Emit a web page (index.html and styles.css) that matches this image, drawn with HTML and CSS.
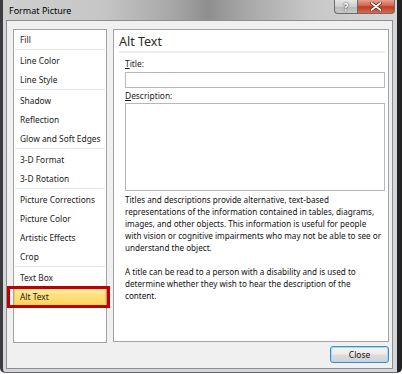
FILE: index.html
```html
<!DOCTYPE html>
<html>
<head>
<meta charset="utf-8">
<link rel="stylesheet" href="styles.css">
</head>
<body>
<div class="window">
  <div class="titlebar">
    <span class="title">Format Picture</span>
    <div class="caption-btns">
      <span class="cbtn help">?</span>
      <span class="cbtn close">
        <svg width="12" height="9" viewBox="0 0 12 9"><path d="M1.5 1 L10.5 8 M10.5 1 L1.5 8" stroke="#5a1a10" stroke-width="3.2" stroke-linecap="round"/><path d="M1.5 1 L10.5 8 M10.5 1 L1.5 8" stroke="#ffffff" stroke-width="1.8" stroke-linecap="round"/></svg>
      </span>
    </div>
  </div>
  <div class="client">
    <div class="panes">
      <ul class="nav">
        <li class="item">Fill</li>
        <li class="sep"></li>
        <li class="item">Line Color</li>
        <li class="item">Line Style</li>
        <li class="sep"></li>
        <li class="item">Shadow</li>
        <li class="item">Reflection</li>
        <li class="item">Glow and Soft Edges</li>
        <li class="sep"></li>
        <li class="item">3-D Format</li>
        <li class="item">3-D Rotation</li>
        <li class="sep"></li>
        <li class="item">Picture Corrections</li>
        <li class="item">Picture Color</li>
        <li class="item">Artistic Effects</li>
        <li class="item">Crop</li>
        <li class="sep"></li>
        <li class="item">Text Box</li>
        <li class="item selected">Alt Text</li>
      </ul>
      <div class="content">
        <h1 class="heading">Alt Text</h1>
        <div class="form">
          <label class="label"><u>T</u>itle:</label>
          <div class="input"></div>
          <label class="label desc-label"><u>D</u>escription:</label>
          <div class="textarea"></div>
          <p class="para">Titles and descriptions provide alternative, text-based<br>representations of the information contained in tables, diagrams,<br>images, and other objects. This information is useful for people<br>with vision or cognitive impairments who may not be able to see or<br>understand the object.</p>
          <p class="para">A title can be read to a person with a disability and is used to<br>determine whether they wish to hear the description of the<br>content.</p>
        </div>
      </div>
    </div>
    <div class="footer">
      <button class="btn">Close</button>
    </div>
  </div>
</div>
</body>
</html>
```

FILE: styles.css
```css
html, body {
  margin: 0;
  padding: 0;
  background: #ffffff;
}

body {
  font-family: "Noto Sans", "Open Sans", sans-serif;
  font-size: 8.4px;
  color: #1a1a1a;
}

.window {
  box-sizing: border-box;
  width: 402px;
  height: 373px;
  background: #d3d6da;
  border-left: 3px solid #3c3c3c;
  border-right: 5px solid #222222;
  border-bottom: 1px solid #6a6a6a;
  border-radius: 0 0 5px 5px;
  display: flex;
  flex-direction: column;
}

.titlebar {
  height: 20px;
  flex: none;
  display: flex;
  justify-content: space-between;
  align-items: flex-start;
  padding: 0 2px 0 6px;
  background: linear-gradient(to right, #cfcfcf 0%, #c6c6c6 25%, #a9a9a9 42%, #8f8f8f 52%, #a8a8a8 62%, #c7c7c7 78%, #d6d6d6 100%);
}

.title {
  font-size: 9px;
  line-height: 21px;
  color: #000;
}

.caption-btns {
  display: flex;
}

.cbtn {
  height: 14px;
  box-sizing: border-box;
  display: flex;
  align-items: center;
  justify-content: center;
  border: 1px solid #6b6b6b;
  border-top: none;
}

.help {
  width: 23px;
  border-radius: 0 0 0 4px;
  border-right: none;
  background: linear-gradient(#e6e6e6, #cfcfcf 50%, #b9b9b9 51%, #c9c9c9);
  color: #ffffff;
  font-size: 10px;
  font-weight: bold;
  text-shadow: 0 0 2px #555, 0 0 1px #333;
}

.close {
  width: 38px;
  border-radius: 0 0 4px 0;
  background: linear-gradient(#e3a293, #d4614c 45%, #c13a24 52%, #d66a4f);
}

.client {
  flex: 1;
  min-height: 0;
  margin: 0 4px 3px 3px;
  border: 1px solid #8e8e8e;
  background: #f0f0f0;
  padding: 8px 3px 5px 6px;
  display: flex;
  flex-direction: column;
}

.panes {
  flex: 1;
  min-height: 0;
  display: flex;
  gap: 6px;
}

.nav {
  flex: none;
  list-style: none;
  margin: 0;
  padding: 0;
  width: 94px;
  box-sizing: border-box;
  border: 1px solid #a3a3a3;
  background: #ffffff;
}

.item {
  position: relative;
  height: 19px;
  line-height: 19px;
  padding-left: 6px;
  white-space: nowrap;
  color: #222;
}

.sep {
  height: 1px;
  margin: 0 1px;
  border-top: 1px solid #e6e6e6;
}

.selected {
  background: linear-gradient(#fff0b4, #ffe07e 45%, #ffd45a 100%);
  box-shadow: inset 0 0 0 1px #f0c85c;
}

.selected::after {
  content: "";
  position: absolute;
  left: -7px;
  right: -4px;
  top: -1px;
  bottom: -2px;
  border: 3px solid #c00000;
}

.content {
  flex: 1;
  min-width: 0;
  overflow: hidden;
  box-sizing: border-box;
  border: 1px solid #a3a3a3;
  background: #ffffff;
  padding: 3px 3px 0 5px;
  margin-bottom: 1px;
}

.heading {
  margin: 0;
  font-size: 12.5px;
  font-weight: normal;
  line-height: 18px;
  color: #2a2a2a;
  border-bottom: 2px solid #ececec;
}

.form {
  padding-left: 6px;
}

.label {
  display: block;
  line-height: 12px;
  margin-top: 5px;
}

.desc-label {
  margin-top: 2px;
}

.input {
  height: 16px;
  box-sizing: border-box;
  border: 1px solid #b5b7bd;
  margin-top: 2px;
}

.textarea {
  height: 88px;
  box-sizing: border-box;
  border: 1px solid #b5b7bd;
  margin-top: 1px;
}

.para {
  margin: 3px 0 12px 0;
  font-size: 8.15px;
  line-height: 12px;
  white-space: nowrap;
  color: #111;
}

.footer {
  display: flex;
  justify-content: flex-end;
  margin-top: 3px;
}

.btn {
  width: 59px;
  height: 17px;
  padding: 0;
  font-family: inherit;
  font-size: 8.4px;
  color: #111;
  border: 1px solid #3c8fc7;
  border-radius: 3px;
  background: linear-gradient(#f4f4f4, #ececec 48%, #dcdcdc 52%, #d2d2d2);
  box-shadow: inset 0 0 0 1px #a9d7f5;
}
```
